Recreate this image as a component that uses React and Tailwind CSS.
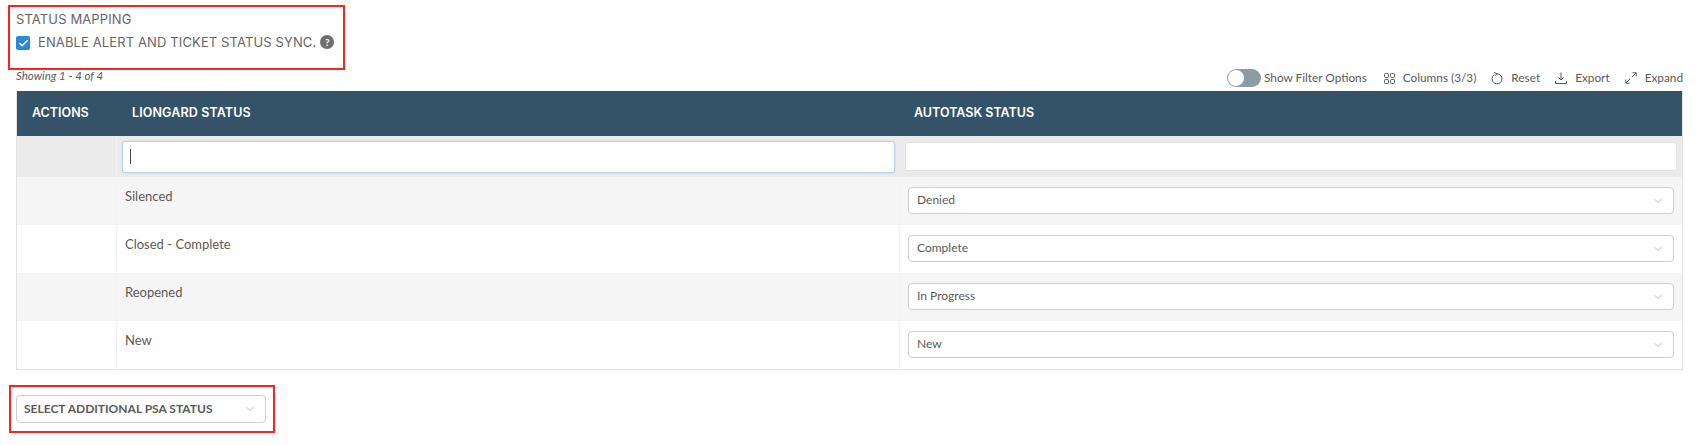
import React from 'react';
import { Check, ChevronDown } from 'lucide-react';

const rows = [
  { name: 'Silenced', status: 'Denied', shaded: true },
  { name: 'Closed - Complete', status: 'Complete', shaded: false },
  { name: 'Reopened', status: 'In Progress', shaded: true },
  { name: 'New', status: 'New', shaded: false },
];

const ColumnsIcon = () => (
  <svg width="11" height="11" viewBox="0 0 11 11" fill="none" stroke="#555" strokeWidth="1">
    <rect x="0.5" y="0.5" width="4" height="4" rx="1" />
    <rect x="6.5" y="0.5" width="4" height="4" rx="1" />
    <rect x="0.5" y="6.5" width="4" height="4" rx="1" />
    <rect x="6.5" y="6.5" width="4" height="4" rx="1" />
  </svg>
);

const ResetIcon = () => (
  <svg width="12" height="13" viewBox="0 0 12 13" fill="none" stroke="#555" strokeWidth="1">
    <path d="M3 2.8A5 5 0 1 0 6 1.8" />
    <path d="M3.2 0.4L6.2 1.8L3.8 3.8" />
  </svg>
);

const ExportIcon = () => (
  <svg width="12" height="12" viewBox="0 0 12 12" fill="none" stroke="#555" strokeWidth="1">
    <path d="M6 0.5V8M3.5 5.5L6 8L8.5 5.5" />
    <path d="M0.5 9V11.5H11.5V9" />
  </svg>
);

const ExpandIcon = () => (
  <svg width="12" height="12" viewBox="0 0 12 12" fill="none" stroke="#555" strokeWidth="1">
    <path d="M7 5L11 1M7.5 0.8H11.2V4.5" />
    <path d="M5 7L1 11M4.5 11.2H0.8V7.5" />
  </svg>
);

const ToolbarItem = ({ icon, label }) => (
  <div className="flex items-center gap-[8px]">
    {icon}
    <span>{label}</span>
  </div>
);

const App = () => {
  return (
    <div className="h-[445px] w-[1697px] overflow-hidden bg-white pl-4 pr-[14px] pt-[5px] font-['Lato',sans-serif] text-[#5a5a5a]">
      {/* Status mapping header */}
      <div className="-ml-2 h-[65px] w-[337px] border-2 border-[#f5271d] pl-[6px] pt-[3px] font-['Inter',sans-serif] text-[#666]">
        <div className="text-[13px] leading-[18px] tracking-[0.12px]">STATUS MAPPING</div>
        <div className="mt-[5px] flex items-center">
          <span className="mt-[2px] flex h-[14px] w-[14px] items-center justify-center rounded-[2px] bg-[#2b88d8]">
            <Check size={11} color="#fff" strokeWidth={3.5} />
          </span>
          <span className="ml-[8px] text-[13px] leading-[18px] tracking-[0.12px]">ENABLE ALERT AND TICKET STATUS SYNC.</span>
          <span className="ml-[4px] -mt-[1px] flex h-[14px] w-[14px] items-center justify-center rounded-full bg-[#6e6e6e] font-['Lato',sans-serif] text-[10px] font-bold leading-none text-white">?</span>
        </div>
      </div>

      {/* Result count + toolbar */}
      <div className="flex h-[21px] items-start justify-between">
        <span className="text-[11.5px] italic leading-[12px]">Showing 1 - 4 of 4</span>
        <div className="-mt-[1px] flex items-center text-[11.8px] leading-[16px]">
          <div className="flex h-[18px] w-[34px] items-center rounded-full bg-[#8f9ba3] pl-[1px]">
            <span className="h-[16px] w-[16px] rounded-full bg-white" />
          </div>
          <span className="-mt-[1px] ml-[3px]">Show Filter Options</span>
          <div className="ml-[17px] flex items-center gap-[15px]">
            <ToolbarItem icon={<ColumnsIcon />} label="Columns (3/3)" />
            <ToolbarItem icon={<ResetIcon />} label="Reset" />
            <ToolbarItem icon={<ExportIcon />} label="Export" />
            <ToolbarItem icon={<ExpandIcon />} label="Expand" />
          </div>
        </div>
      </div>

      {/* Table */}
      <div className="border border-t-0 border-[#e2e2e2] text-[13px]">
        <div className="grid h-[45px] grid-cols-[100px_782px_1fr] items-center bg-[#345268] font-['Inter',sans-serif] text-[12.5px] font-semibold text-white">
          <div className="pl-[15px]">ACTIONS</div>
          <div className="pl-[15px] tracking-[0.12px]">LIONGARD STATUS</div>
          <div className="pl-[15px]">AUTOTASK STATUS</div>
        </div>
        <div className="grid h-[41px] grid-cols-[100px_782px_1fr] bg-[#ebebeb]">
          <div className="border-r border-[#f3f3f3]" />
          <div className="flex items-center pl-[5px] pr-[4px]">
            <div className="flex h-[32px] w-full items-center rounded-[3px] border border-[#b3d4ea] bg-white pl-[7px] shadow-[0_0_2px_#b3d4ea]">
              <span className="h-[15px] w-px bg-[#444]" />
            </div>
          </div>
          <div className="flex items-center pl-[6px] pr-[5px]">
            <div className="h-[29px] w-full rounded-[3px] border border-[#e2e2e2] bg-white" />
          </div>
        </div>
        {rows.map((row) => (
          <div
            key={row.name}
            className={`grid h-[48px] grid-cols-[100px_782px_1fr] ${row.shaded ? 'bg-[#f5f5f5]' : 'bg-white'}`}
          >
            <div className="border-r border-[#f3f3f3]" />
            <div className="pl-[8px] pt-[10px] text-[13px] leading-[18px]">{row.name}</div>
            <div className="border-l border-[#f3f3f3] pl-[8px] pr-[8px] pt-[10px]">
              <div className="flex h-[27px] items-center justify-between rounded-[4px] border border-[#cfcfcf] bg-white pl-[8px] pr-[9px] text-[12px]">
                <span className="-mt-[1px]">{row.status}</span>
                <ChevronDown size={12} color="#999" strokeWidth={1.25} />
              </div>
            </div>
          </div>
        ))}
      </div>

      {/* Additional PSA status */}
      <div className="-ml-[7px] mt-[15px] h-[48px] w-[266px] border-2 border-[#f5271d] pl-[5px] pt-[8px]">
        <div className="flex h-[28px] w-[250px] items-center justify-between rounded-[4px] border border-[#cfcfcf] pl-[7px] pr-[9px] text-[12px] font-bold">
          <span>SELECT ADDITIONAL PSA STATUS</span>
          <ChevronDown size={12} color="#999" strokeWidth={1.25} />
        </div>
      </div>
    </div>
  );
};

export default App;
